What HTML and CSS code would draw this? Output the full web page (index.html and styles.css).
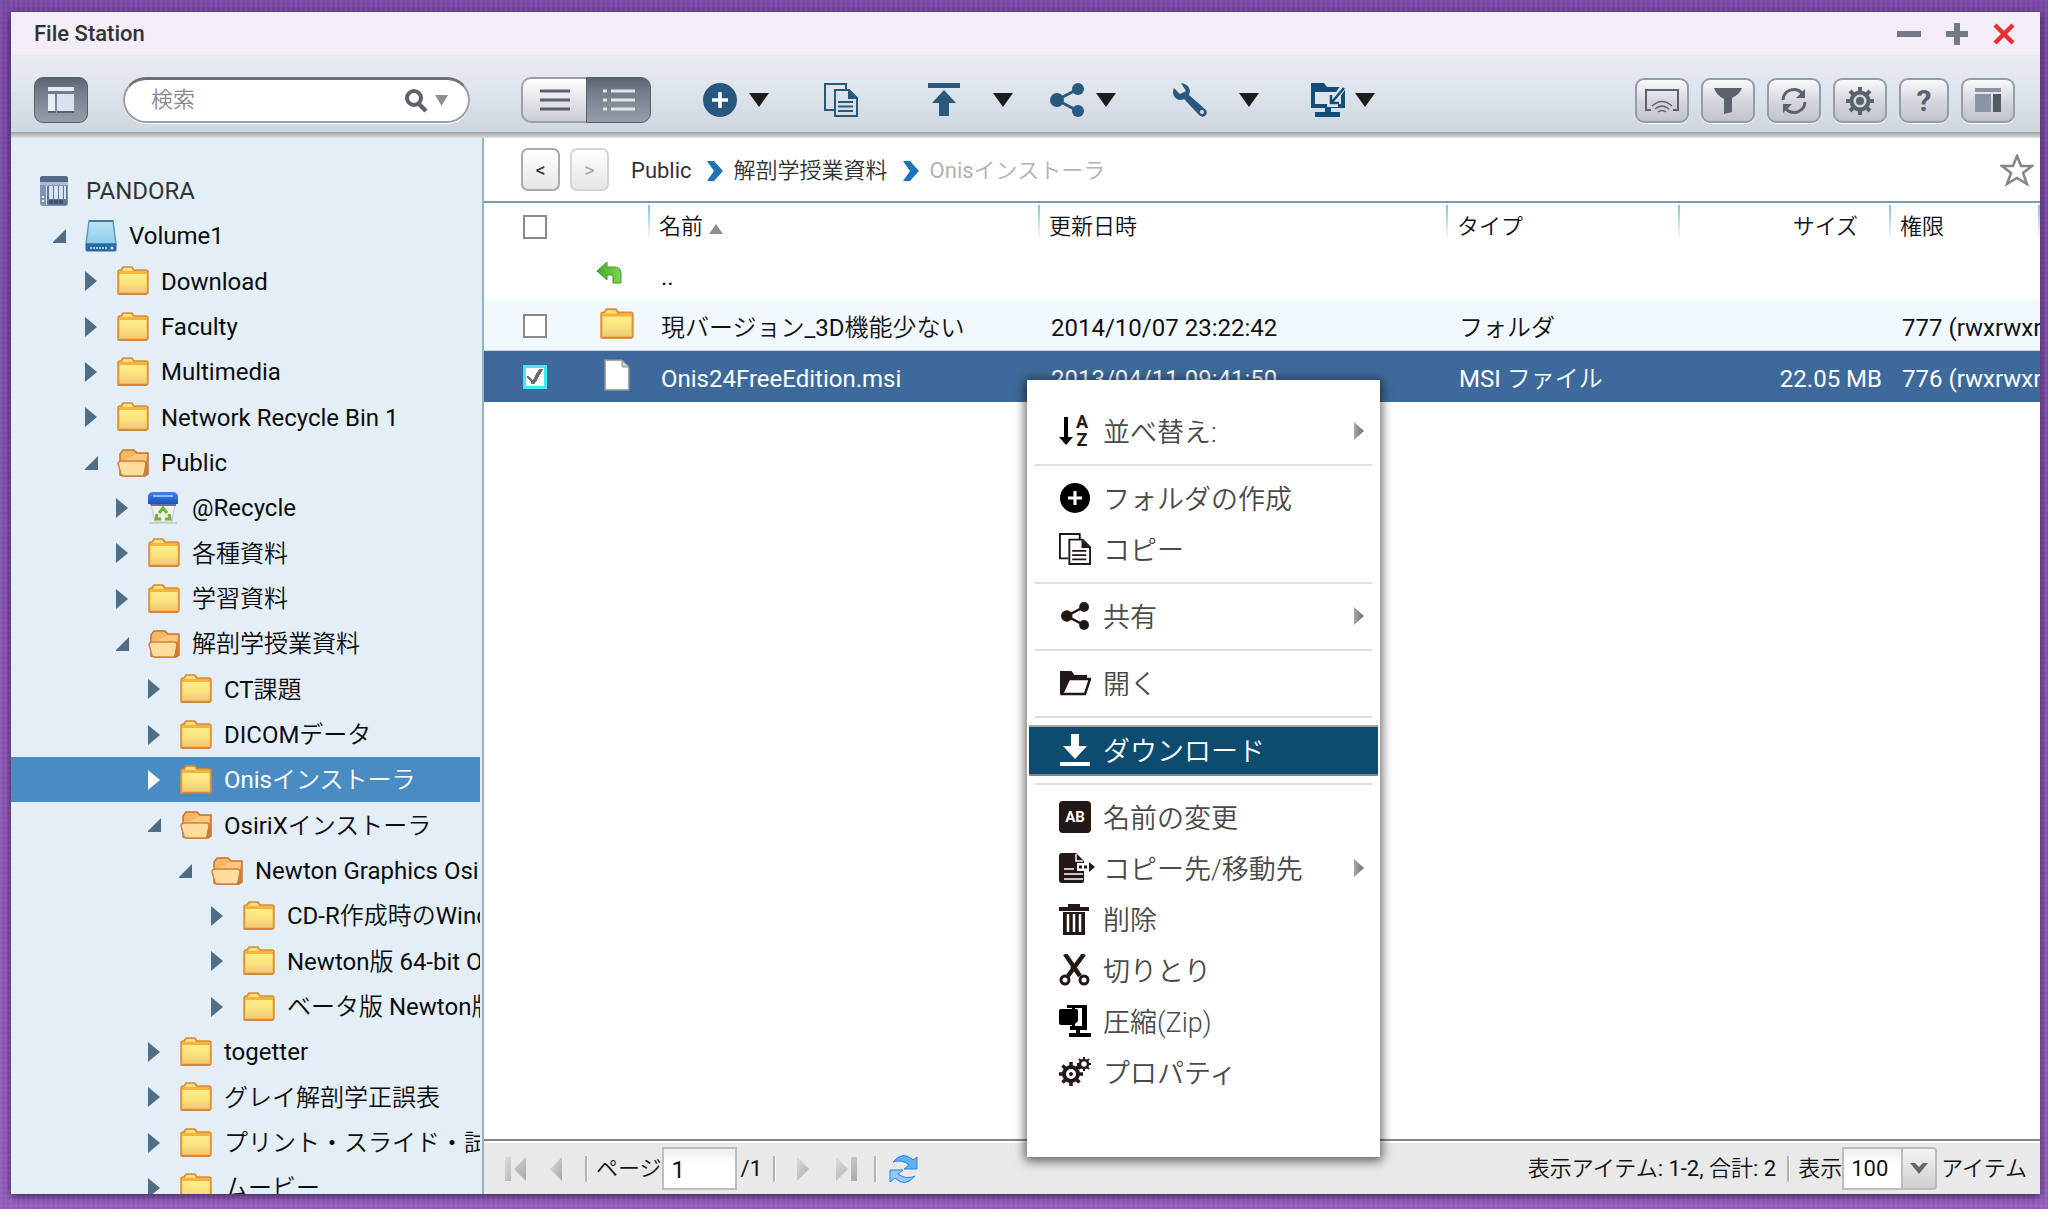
FILE: index.html
```html
<!DOCTYPE html>
<html lang="ja">
<head>
<meta charset="utf-8">
<title>File Station</title>
<link rel="stylesheet" href="styles.css">
</head>
<body>
<svg class="defs" width="0" height="0" aria-hidden="true">
  <defs>
    <linearGradient id="gFolder" x1="0" y1="0" x2="0" y2="1"><stop offset="0" stop-color="#ffee8c"/><stop offset=".5" stop-color="#fbe47f"/><stop offset="1" stop-color="#f0c877"/></linearGradient>
    <linearGradient id="gDrive" x1="0" y1="0" x2="0" y2="1"><stop offset="0" stop-color="#bfe3f5"/><stop offset="1" stop-color="#8accec"/></linearGradient>
    <linearGradient id="gLid" x1="0" y1="0" x2="0" y2="1"><stop offset="0" stop-color="#3f86ea"/><stop offset="1" stop-color="#1c4fc4"/></linearGradient>
    <linearGradient id="gUp" x1="0" y1="0" x2="1" y2="0"><stop offset="0" stop-color="#45a82e"/><stop offset="1" stop-color="#7fd64f"/></linearGradient>
    <linearGradient id="gPager" x1="0" y1="0" x2="1" y2="1"><stop offset="0" stop-color="#dcdcdc"/><stop offset="1" stop-color="#a8a8a8"/></linearGradient>
    <linearGradient id="gSub" x1="0" y1="0" x2="1" y2="0"><stop offset="0" stop-color="#a9a9a9"/><stop offset="1" stop-color="#6e6e6e"/></linearGradient>
  </defs>
  <symbol id="closed" viewBox="0 0 14 20"><path d="M0 0 12 10 0 20z" fill="currentColor"/></symbol>
  <symbol id="opened" viewBox="0 0 14 20"><path d="M13 3V17H-1z" fill="currentColor"/></symbol>
  <symbol id="folder" viewBox="0 0 32 30"><path d="M1 28V6q0-2 2-2h1l2-3h9l2 3h12q2 0 2 2v20q0 2-2 2z" fill="#f7b23c" stroke="#d98e3e" stroke-width="1.5"/><path d="M5 5l2-3h7l2 3z" fill="#fddf7c"/><path d="M2.500 8h27v18.500h-27z" fill="url(#gFolder)"/><path d="M2 28h28" stroke="#c9803a" stroke-width="1.500"/></symbol>
  <symbol id="folder-open" viewBox="0 0 32 30"><path d="M3 27V6l3-4h11l3 3h11v21l-3 2H6z" fill="#f6b765" stroke="#c9722f" stroke-width="1.500"/><path d="M20 6h10v16l-2-9H6" fill="#fbc77c"/><path d="M1 16q0-3 4-3h21q3 0 3 3l-2 11q0 1-2 1H7q-2 0-3-2z" fill="#fddc9e" stroke="#d2813a" stroke-width="1.500"/><path d="M30 8v18l-4 2 3-12z" fill="#cf7a34"/></symbol>
  <symbol id="nas" viewBox="0 0 28 30"><rect width="28" height="30" rx="3" fill="#7d93b8"/><path d="M0 7V3q0-3 3-3h22q3 0 3 3v4z" fill="#596a86"/><path d="M0 6h28v3H0z" fill="#aebdd6"/><path d="M7 10h20v19H7z" fill="#5f7499"/><path d="M9 10h4v13H9zm5 0h4v13h-4zm5 0h4v13h-4zM6 9h1v20H6z" fill="#d9e3f0"/><path d="M24 10h2v13h-2z" fill="#d9e3f0"/><path d="M9 24h4v4H9zm5 0h4v4h-4zm5 0h4v4h-4z" fill="#41506c"/><path d="M2 20h2v2H2zm0 4h2v2H2z" fill="#e6edf6"/></symbol>
  <symbol id="drive" viewBox="0 0 32 32"><path d="M4 1h24l3 23H1z" fill="url(#gDrive)" stroke="#5c9cc4" stroke-width="1.500"/><path d="M4 1h24" stroke="#4d7699" stroke-width="2"/><path d="M1 24h30v6q0 1-1 1H2q-1 0-1-1z" fill="#2b6ba0" stroke="#2b679a"/><path d="M5 28h17" stroke="#9cc6e4" stroke-width="2" stroke-dasharray="2 1"/><circle cx="27" cy="28" r="1.500" fill="#c7e6f7"/></symbol>
  <symbol id="bin" viewBox="0 0 32 32"><path d="M3 12h24l-3 18H7z" fill="#efefec" stroke="#c3c7c8"/><path d="M1 31h28" stroke="#b4babd"/><path d="M0 12V4q1-4 5-4h20q4 0 5 4v8z" fill="url(#gLid)"/><path d="M5 4h20" stroke="#8dbcf6" stroke-width="2"/><path d="M2 12h26v2H3z" fill="#66728a"/><path d="M11 21l4-5 4 5M21 22l1 5h-5M9 22l-1 5h5" fill="none" stroke="#6fb23c" stroke-width="3"/></symbol>
  <symbol id="file" viewBox="0 0 26 32"><path d="M1 1h17l7 7v23H1z" fill="#fff" stroke="#8b8f94" stroke-width="1.500"/><path d="M18 1v7h7z" fill="#c9ccd0" stroke="#8b8f94"/></symbol>
  <symbol id="up" viewBox="0 0 26 22"><path d="M1 9 11 0v5h7q7 0 7 7v9h-8v-6q0-2-2-2h-4v5z" fill="url(#gUp)" stroke="#3f9a2c"/></symbol>

  <symbol id="plus" viewBox="0 0 34 34"><circle cx="17" cy="17" r="17" fill="currentColor"/><path d="M17 9v16M9 17h16" stroke="#fff" stroke-width="3.500"/></symbol>
  <symbol id="copy" viewBox="0 0 34 34"><path d="M10 27H1V1h21v6" fill="none" stroke="currentColor" stroke-width="2"/><path d="M11 7h14l8 8v18H11z" fill="none" stroke="currentColor" stroke-width="2"/><path d="M24 7v9h9z" fill="currentColor"/><path d="M14 19h15M14 23.500h15M14 28h15" stroke="currentColor" stroke-width="2"/></symbol>
  <symbol id="upload" viewBox="0 0 34 34"><path d="M1 0h32v5H1zM17 7l12 13h-7v13H12V20H5z" fill="currentColor"/></symbol>
  <symbol id="share" viewBox="0 0 34 34"><path d="M28 6 7 17l21 11" fill="none" stroke="currentColor" stroke-width="3"/><circle cx="7" cy="17" r="7" fill="currentColor"/><circle cx="28" cy="6" r="6" fill="currentColor"/><circle cx="28" cy="28" r="6" fill="currentColor"/></symbol>
  <symbol id="wrench" viewBox="0 0 34 34"><path d="M8 0q8 1 9 8l-1 4 17 15q2 3-1 6-3 2-6-1L11 16q-6 3-10-3-2-4 0-8l6 6 6-3z" fill="currentColor"/><circle cx="29" cy="29" r="2" fill="#dfe4ea"/></symbol>
  <symbol id="remote" viewBox="0 0 34 34"><path d="M0 0h13l3 4h18v21H20v4h9v5H4v-5h10v-4H0z" fill="currentColor"/><path d="M4 9h26v12H4z" fill="#dfe4ea"/><path d="M33 3 21 20M19 12v9h8" fill="none" stroke="#dfe4ea" stroke-width="6"/><path d="M33 5 21 19M20 12v8h8" fill="none" stroke="currentColor" stroke-width="2.500"/></symbol>
  <symbol id="caret" viewBox="0 0 20 14"><path d="M0 0h20L10 14z" fill="currentColor"/></symbol>

  <symbol id="cast" viewBox="0 0 34 24"><path d="M6 21H1V1h32v20h-5" fill="none" stroke="currentColor" stroke-width="2"/><path d="M7 17q10-9 20 0M10 20q7-6 14 0M13 23q4-3 8 0" fill="none" stroke="currentColor" stroke-width="1.500"/></symbol>
  <symbol id="filter" viewBox="0 0 28 26"><path d="M0 0h28q-2 6-10 10v14l-8 2V11Q2 7 0 0z" fill="currentColor"/></symbol>
  <symbol id="sync" viewBox="0 0 28 28"><path d="M3 13A11 11 0 0 1 22 6M25 15A11 11 0 0 1 6 22" fill="none" stroke="currentColor" stroke-width="3"/><path d="M25 2v9H16zM3 26V17h9z" fill="currentColor"/></symbol>
  <symbol id="gear" viewBox="0 0 28 28"><path d="M14 0v28M0 14h28M4 4l20 20M24 4 4 24" stroke="currentColor" stroke-width="4"/><circle cx="14" cy="14" r="8.500" fill="#d6dae0" stroke="currentColor" stroke-width="4"/><circle cx="14" cy="14" r="4" fill="currentColor"/></symbol>
  <symbol id="star" viewBox="0 0 34 32"><path d="M17 2l4 10h11l-9 7 4 11-10-6-10 6 4-11-9-7h11z" fill="none" stroke="currentColor" stroke-width="2.500"/></symbol>
  <symbol id="chev" viewBox="0 0 16 20"><path d="M0 0h7l9 10-9 10H0l7-10z" fill="#1f74b8"/></symbol>

  <symbol id="open" viewBox="0 0 32 26"><path d="M2 24V2h10l3 4h12v4" fill="currentColor" stroke="currentColor" stroke-width="2"/><path d="M3 24 10 9h21l-5 15z" fill="#fff" stroke="currentColor" stroke-width="2.500"/></symbol>
  <symbol id="download" viewBox="0 0 32 32"><path d="M12 0h8v12h8L16 25 4 12h8zM1 28h30v4H1z" fill="currentColor"/></symbol>
  <symbol id="moveto" viewBox="0 0 36 30"><path d="M3 0h14l8 8v20q0 2-2 2H3q-3 0-3-3V3q0-3 3-3z" fill="currentColor"/><path d="M17 1v7h7M5 16h10M5 21h19M5 26h19" fill="none" stroke="#fff" stroke-width="1.500"/><path d="M18 10h18v8H18z" fill="#fff"/><path d="M20 14h10" stroke="currentColor" stroke-width="3" stroke-dasharray="3 2"/><path d="M30 9l6 5-6 5z" fill="currentColor"/></symbol>
  <symbol id="trash" viewBox="0 0 32 32"><path d="M0 4h9V1h12v3h9v4H0zM4 9h22v23H4z" fill="currentColor"/><path d="M9 11v18M15 11v18M21 11v18" stroke="#fff" stroke-width="2.500"/></symbol>
  <symbol id="cut" viewBox="0 0 32 32"><path d="M6 0l15 22M25 0 9 22" stroke="currentColor" stroke-width="4.500"/><path d="M16 15l-3-3M15 15h2" stroke="currentColor" stroke-width="5"/><circle cx="6" cy="26" r="4" fill="none" stroke="currentColor" stroke-width="3"/><circle cx="25" cy="26" r="4" fill="none" stroke="currentColor" stroke-width="3"/></symbol>
  <symbol id="zip" viewBox="0 0 32 32"><path d="M8 0h20v25h-7v3h11v4H10v-4h7v-3h-6v-4h2V3H8z" fill="currentColor"/><path d="M16 3h7v18h-7z" fill="#fff"/><path d="M2 4h15q2 0 2 2v10l-4 4H2q-2 0-2-2V6q0-2 2-2z" fill="currentColor"/></symbol>
  <symbol id="gears" viewBox="0 0 32 32"><path d="M12 6v24M0 18h24M3.500 9.500l17 17M20.500 9.500l-17 17" stroke="currentColor" stroke-width="3.500"/><circle cx="12" cy="18" r="7" fill="#fff" stroke="currentColor" stroke-width="4"/><circle cx="12" cy="18" r="2" fill="currentColor"/><path d="M25 1v14M18 8h14M20 3l10 10M30 3 20 13" stroke="currentColor" stroke-width="2"/><circle cx="25" cy="8" r="4" fill="#fff" stroke="currentColor" stroke-width="2.500"/></symbol>
  <symbol id="sub" viewBox="0 0 10 18"><path d="M0 0 10 9 0 18z" fill="url(#gSub)"/></symbol>

  <symbol id="first" viewBox="0 0 21 24"><path d="M0 0h6v24H0zM21 0v24L9 12z" fill="url(#gPager)"/></symbol>
  <symbol id="prev" viewBox="0 0 12 24"><path d="M12 0v24L0 12z" fill="url(#gPager)"/></symbol>
  <symbol id="next" viewBox="0 0 12 24"><path d="M0 0v24l12-12z" fill="url(#gPager)"/></symbol>
  <symbol id="last" viewBox="0 0 21 24"><path d="M15 0h6v24h-6zM0 0v24l12-12z" fill="url(#gPager)"/></symbol>
  <symbol id="reload" viewBox="0 0 30 28"><path d="M4 7Q14-5 24 5l4-3v12H15l5-4Q13 4 4 7z" fill="#5fb0f6" stroke="#2b82df"/><path d="M26 21Q16 33 6 23l-5 4V15h13l-5 4q8 6 17 2z" fill="#8ecbfa" stroke="#2b82df"/></symbol>
</svg>

<main class="window">
  <header class="titlebar">
    <h1>File Station</h1>
    <div class="winbtns">
      <button aria-label="最小化"><svg width="24" height="22"><path d="M0 8h24v6H0z" fill="#727a85"/></svg></button>
      <button aria-label="最大化"><svg width="22" height="22"><path d="M8 0h6v8h8v6h-8v8H8v-8H0V8h8z" fill="#727a85"/></svg></button>
      <button aria-label="閉じる"><svg width="22" height="22"><path d="M2 2l18 18M20 2 2 20" stroke="#e83030" stroke-width="4.500"/></svg></button>
    </div>
  </header>

  <div class="toolbar">
    <button class="dark toggle" aria-label="ツリー表示"><svg width="26" height="26"><path d="M0 0h26v4H0zM0 7h7v17H0z" fill="#e8edf4"/><path d="M9 7h17v17H9z" fill="#d9e2ec"/><path d="M0 25h8M9 25h17" stroke="#5a626d" stroke-width="2"/></svg></button>
    <div class="search">
      <input type="search" placeholder="検索" aria-label="検索">
      <svg width="22" height="24"><circle cx="9" cy="10" r="7" fill="none" stroke="#5b646e" stroke-width="4"/><path d="M14 16l7 7" stroke="#5b646e" stroke-width="4.500"/></svg>
      <svg width="13" height="11"><path d="M0 0h13L6.500 11z" fill="#8b9299"/></svg>
    </div>
    <div class="views">
      <button aria-label="リスト"><svg width="30" height="22"><path d="M0 2h30M0 11h30M0 20h30" stroke="#5a6068" stroke-width="3"/></svg></button>
      <button class="dark" aria-label="詳細"><svg width="32" height="22"><path d="M0 2h4M8 2h24M0 11h4M8 11h24M0 20h4M8 20h24" stroke="#dfe6ee" stroke-width="3"/></svg></button>
    </div>
    <div class="tools">
      <button class="t1" aria-label="作成"><svg width="34" height="34"><use href="#plus"/></svg><svg class="caret" width="20" height="14"><use href="#caret"/></svg></button>
      <button class="t2" aria-label="コピー"><svg width="34" height="34"><use href="#copy"/></svg></button>
      <button class="t3" aria-label="アップロード"><svg width="34" height="34"><use href="#upload"/></svg><svg class="caret" width="20" height="14"><use href="#caret"/></svg></button>
      <button class="t4" aria-label="共有"><svg width="34" height="34"><use href="#share"/></svg><svg class="caret" width="20" height="14"><use href="#caret"/></svg></button>
      <button class="t5" aria-label="ツール"><svg width="34" height="34"><use href="#wrench"/></svg><svg class="caret" width="20" height="14"><use href="#caret"/></svg></button>
      <button class="t6" aria-label="リモート接続"><svg width="34" height="34"><use href="#remote"/></svg><svg class="caret" width="20" height="14"><use href="#caret"/></svg></button>
    </div>
    <div class="right">
      <button class="light" aria-label="ストリーミング"><svg width="34" height="24"><use href="#cast"/></svg></button>
      <button class="light" aria-label="フィルター"><svg width="28" height="26"><use href="#filter"/></svg></button>
      <button class="light" aria-label="更新"><svg width="28" height="28"><use href="#sync"/></svg></button>
      <button class="light" aria-label="設定"><svg width="28" height="28"><use href="#gear"/></svg></button>
      <button class="light help">?</button>
      <button class="light" aria-label="詳細パネル"><svg width="26" height="26"><path d="M0 0h26v4H0zM0 6h16v18H0z" fill="#8b94a0"/><path d="M18 6h8v18h-8z" fill="#555b64"/></svg></button>
    </div>
  </div>

  <div class="body">
    <nav class="sidebar" aria-label="フォルダツリー">
      <ul class="tree">
        <li class="root"><svg width="28" height="30"><use href="#nas"/></svg><span>PANDORA</span></li>
        <li class="l1"><svg class="ar" width="14" height="20"><use href="#opened"/></svg><svg width="32" height="32"><use href="#drive"/></svg><span>Volume1</span></li>
        <li class="l2"><svg class="ar" width="14" height="20"><use href="#closed"/></svg><svg width="32" height="30"><use href="#folder"/></svg><span>Download</span></li>
        <li class="l2"><svg class="ar" width="14" height="20"><use href="#closed"/></svg><svg width="32" height="30"><use href="#folder"/></svg><span>Faculty</span></li>
        <li class="l2"><svg class="ar" width="14" height="20"><use href="#closed"/></svg><svg width="32" height="30"><use href="#folder"/></svg><span>Multimedia</span></li>
        <li class="l2"><svg class="ar" width="14" height="20"><use href="#closed"/></svg><svg width="32" height="30"><use href="#folder"/></svg><span>Network Recycle Bin 1</span></li>
        <li class="l2"><svg class="ar" width="14" height="20"><use href="#opened"/></svg><svg width="32" height="30"><use href="#folder-open"/></svg><span>Public</span></li>
        <li class="l3"><svg class="ar" width="14" height="20"><use href="#closed"/></svg><svg width="32" height="32"><use href="#bin"/></svg><span>@Recycle</span></li>
        <li class="l3"><svg class="ar" width="14" height="20"><use href="#closed"/></svg><svg width="32" height="30"><use href="#folder"/></svg><span>各種資料</span></li>
        <li class="l3"><svg class="ar" width="14" height="20"><use href="#closed"/></svg><svg width="32" height="30"><use href="#folder"/></svg><span>学習資料</span></li>
        <li class="l3"><svg class="ar" width="14" height="20"><use href="#opened"/></svg><svg width="32" height="30"><use href="#folder-open"/></svg><span>解剖学授業資料</span></li>
        <li class="l4"><svg class="ar" width="14" height="20"><use href="#closed"/></svg><svg width="32" height="30"><use href="#folder"/></svg><span>CT課題</span></li>
        <li class="l4"><svg class="ar" width="14" height="20"><use href="#closed"/></svg><svg width="32" height="30"><use href="#folder"/></svg><span>DICOMデータ</span></li>
        <li class="l4 sel"><svg class="ar" width="14" height="20"><use href="#closed"/></svg><svg width="32" height="30"><use href="#folder"/></svg><span>Onisインストーラ</span></li>
        <li class="l4"><svg class="ar" width="14" height="20"><use href="#opened"/></svg><svg width="32" height="30"><use href="#folder-open"/></svg><span>OsiriXインストーラ</span></li>
        <li class="l5"><svg class="ar" width="14" height="20"><use href="#opened"/></svg><svg width="32" height="30"><use href="#folder-open"/></svg><span>Newton Graphics Osi</span></li>
        <li class="l6"><svg class="ar" width="14" height="20"><use href="#closed"/></svg><svg width="32" height="30"><use href="#folder"/></svg><span>CD-R作成時のWind</span></li>
        <li class="l6"><svg class="ar" width="14" height="20"><use href="#closed"/></svg><svg width="32" height="30"><use href="#folder"/></svg><span>Newton版 64-bit O</span></li>
        <li class="l6"><svg class="ar" width="14" height="20"><use href="#closed"/></svg><svg width="32" height="30"><use href="#folder"/></svg><span>ベータ版 Newton版</span></li>
        <li class="l4"><svg class="ar" width="14" height="20"><use href="#closed"/></svg><svg width="32" height="30"><use href="#folder"/></svg><span>togetter</span></li>
        <li class="l4"><svg class="ar" width="14" height="20"><use href="#closed"/></svg><svg width="32" height="30"><use href="#folder"/></svg><span>グレイ解剖学正誤表</span></li>
        <li class="l4"><svg class="ar" width="14" height="20"><use href="#closed"/></svg><svg width="32" height="30"><use href="#folder"/></svg><span>プリント・スライド・試</span></li>
        <li class="l4"><svg class="ar" width="14" height="20"><use href="#closed"/></svg><svg width="32" height="30"><use href="#folder"/></svg><span>ムービー</span></li>
      </ul>
    </nav>

    <section class="content">
      <div class="crumbs">
        <button class="nav">&lt;</button>
        <button class="nav off" disabled>&gt;</button>
        <a href="#">Public</a>
        <svg width="16" height="20"><use href="#chev"/></svg>
        <a href="#">解剖学授業資料</a>
        <svg width="16" height="20"><use href="#chev"/></svg>
        <span class="here">Onisインストーラ</span>
        <button class="fav" aria-label="お気に入り"><svg width="34" height="32"><use href="#star"/></svg></button>
      </div>

      <div class="grid">
        <table>
          <colgroup><col class="c-check"><col class="c-icon"><col class="c-name"><col class="c-date"><col class="c-type"><col class="c-size"><col></colgroup>
          <thead>
            <tr>
              <th class="chk"><input type="checkbox" aria-label="すべて選択"></th>
              <th class="ico"></th>
              <th>名前 <svg width="14" height="10"><path d="M7 0l7 10H0z" fill="#8d8d8d"/></svg></th>
              <th>更新日時</th>
              <th>タイプ</th>
              <th class="size">サイズ</th>
              <th>権限</th>
            </tr>
          </thead>
          <tbody>
            <tr><td></td><td class="ico"><svg class="back" width="26" height="22"><use href="#up"/></svg></td><td>..</td><td></td><td></td><td></td><td></td></tr>
            <tr class="alt"><td class="chk"><input type="checkbox" aria-label="現バージョン_3D機能少ない"></td><td class="ico"><svg width="34" height="32"><use href="#folder"/></svg></td><td>現バージョン_3D機能少ない</td><td>2014/10/07 23:22:42</td><td>フォルダ</td><td></td><td>777 (rwxrwxr</td></tr>
            <tr class="sel"><td class="chk"><input type="checkbox" checked aria-label="Onis24FreeEdition.msi"></td><td class="ico"><svg width="34" height="32"><use href="#file"/></svg></td><td>Onis24FreeEdition.msi</td><td>2013/04/11 09:41:50</td><td>MSI ファイル</td><td class="size">22.05 MB</td><td>776 (rwxrwxr</td></tr>
          </tbody>
        </table>
      </div>

      <footer class="pager">
        <button class="p-first" aria-label="最初のページ"><svg width="21" height="24"><use href="#first"/></svg></button>
        <button class="p-prev" aria-label="前のページ"><svg width="12" height="24"><use href="#prev"/></svg></button>
        <i class="bar"></i>
        <label for="page">ページ</label>
        <input id="page" type="text" value="1">
        <span class="total">/1</span>
        <i class="bar"></i>
        <button class="p-next" aria-label="次のページ"><svg width="12" height="24"><use href="#next"/></svg></button>
        <button class="p-last" aria-label="最後のページ"><svg width="21" height="24"><use href="#last"/></svg></button>
        <i class="bar"></i>
        <button class="p-reload" aria-label="再読み込み"><svg width="30" height="28"><use href="#reload"/></svg></button>
        <span class="count">表示アイテム: 1-2, 合計: 2</span>
        <i class="bar"></i>
        <label for="per">表示</label>
        <span class="combo"><select id="per"><option>100</option></select><svg width="18" height="12"><path d="M0 1h5l4 4 4-4h5L9 12z" fill="#666"/></svg></span>
        <span class="unit">アイテム</span>
      </footer>
    </section>
  </div>

  <div class="menu" role="menu">
    <button role="menuitem"><svg width="32" height="32"><path d="M5 2h4v20h5l-7 8-7-8h5z" fill="#000"/><text x="23" y="13" text-anchor="middle" class="sort-text">A</text><text x="23" y="31" text-anchor="middle" class="sort-text">Z</text></svg>並べ替え:<svg class="sub" width="10" height="18"><use href="#sub"/></svg></button>
    <hr>
    <button role="menuitem"><svg class="black" width="32" height="30"><use href="#plus"/></svg>フォルダの作成</button>
    <button role="menuitem"><svg width="32" height="32"><use href="#copy"/></svg>コピー</button>
    <hr>
    <button role="menuitem"><svg width="32" height="28"><use href="#share"/></svg>共有<svg class="sub" width="10" height="18"><use href="#sub"/></svg></button>
    <hr>
    <button role="menuitem"><svg width="32" height="26"><use href="#open"/></svg>開く</button>
    <hr>
    <button role="menuitem" class="on"><svg width="32" height="32"><use href="#download"/></svg>ダウンロード</button>
    <hr>
    <button role="menuitem"><svg width="32" height="32"><rect width="32" height="32" rx="4" fill="currentColor"/><text x="16" y="21" text-anchor="middle" class="badge-text">AB</text></svg>名前の変更</button>
    <button role="menuitem"><svg class="wide" width="36" height="30"><use href="#moveto"/></svg>コピー先/移動先<svg class="sub" width="10" height="18"><use href="#sub"/></svg></button>
    <button role="menuitem"><svg width="32" height="32"><use href="#trash"/></svg>削除</button>
    <button role="menuitem"><svg width="32" height="32"><use href="#cut"/></svg>切りとり</button>
    <button role="menuitem"><svg class="black" width="32" height="32"><use href="#zip"/></svg>圧縮(Zip)</button>
    <button role="menuitem"><svg width="32" height="32"><use href="#gears"/></svg>プロパティ</button>
  </div>
</main>
</body>
</html>
```
FILE: styles.css
```css
* { box-sizing: border-box; }
html, body { margin: 0; height: 100%; }
body {
  padding: 12px 8px 15px 11px;
  overflow: hidden;
  font-family: Roboto, "Noto Sans CJK JP DemiLight", "Noto Sans CJK JP", sans-serif;
  font-size: 24px;
  line-height: 1.2;
  color: #111;
  background:
    repeating-linear-gradient(90deg, rgba(255,255,255,.05) 0 2px, transparent 2px 5px),
    repeating-linear-gradient(0deg, rgba(40,0,80,.06) 0 2px, transparent 2px 5px),
    linear-gradient(#7b49a6, #9560bd);
}
button, input, select { font: inherit; color: inherit; margin: 0; }
button { padding: 0; border: 0; background: none; }
svg { display: block; flex: none; overflow: visible; }
.defs { position: absolute; }

.window {
  position: relative;
  display: flex;
  flex-direction: column;
  height: 100%;
  background: #fff;
  box-shadow: 0 2px 8px rgba(20,0,40,.7);
}

/* title bar */
.titlebar {
  flex: none;
  display: flex;
  align-items: center;
  justify-content: space-between;
  height: 43px;
  padding: 0 25px 0 23px;
  background: #f2edf6;
}
h1 { margin: 0; padding-top: 2px; font-size: 22px; font-weight: 500; color: #333; }
.winbtns { display: flex; gap: 25px; }

/* toolbar */
.toolbar {
  flex: none;
  display: flex;
  align-items: center;
  height: 83px;
  padding: 12px 25px 6px 23px;
  background:
    linear-gradient(#9fa4a7, #b4b7b8 40%, #e2e2e2) 0 100% / 100% 6px no-repeat,
    linear-gradient(#e6ecef, #dfe5ec 40%, #ced4dc);
}
.toolbar button { display: flex; align-items: center; justify-content: center; }
.toolbar .dark {
  background: linear-gradient(#5a6470, #737c87 30%, #959da8);
  border: 1px solid #59616c;
}
.toggle { width: 54px; height: 46px; border-radius: 9px; }
.search {
  display: flex;
  align-items: center;
  gap: 8px;
  width: 347px;
  height: 46px;
  margin: 0 51px 0 35px;
  padding: 0 20px 0 26px;
  border: 2px solid #9b9ea2;
  border-top: 3px solid #6d6f72;
  border-radius: 23px;
  background: #fff;
  box-shadow: 0 1px 0 #fff;
}
.search input { flex: 1; min-width: 0; padding: 0; border: 0; outline: 0; background: none; font-size: 22px; }
.search input::placeholder { color: #8a8a8a; }
.views { display: flex; width: 130px; height: 46px; }
.views button {
  flex: 1;
  border: 2px solid #9aa0ab;
  border-right: 0;
  border-radius: 10px 0 0 10px;
  background: linear-gradient(#fff, #c8cdd6);
}
.views .dark { border-radius: 0 10px 10px 0; border-right: 1px solid #59616c; }
.tools { display: flex; align-items: center; margin-left: 52px; color: #29587f; }
.caret { color: #1c1c1c; }
.t1 { gap: 12px; margin-right: 55px; }
.t2 { margin-right: 69px; }
.t3 { gap: 32px; margin-right: 37px; }
.t4 { gap: 12px; margin-right: 57px; }
.t5 { gap: 32px; margin-right: 52px; }
.t6 { gap: 10px; color: #0f4f78; }
.right { display: flex; gap: 12px; margin: 2px 0 0 auto; color: #5b626c; }
.light {
  width: 54px;
  height: 45px;
  border: 2px solid #969ca8;
  border-radius: 9px;
  background: linear-gradient(#f8f9fb, #d5d8de 50%, #bfc4cc);
  box-shadow: 0 1px 0 #fff;
}
.right .help { width: 50px; font-size: 30px; font-weight: 700; }

.body { flex: 1; display: flex; min-height: 0; }

/* folder tree */
.sidebar {
  flex: none;
  width: 473px;
  overflow: hidden;
  background: #e3eef7;
  border-right: 2px solid #8fb6c6;
}
.tree {
  display: grid;
  grid-auto-rows: 45px 45px 46px;
  margin: 0;
  padding: 30px 2px 0 0;
  list-style: none;
  color: #0c0c0c;
}
.tree li { display: flex; align-items: center; overflow: hidden; white-space: nowrap; }
.tree span { padding-top: 2px; }
.tree svg { margin-right: 12px; }
.tree .ar { margin-right: 18px; color: #4f6e86; }
.root { padding-left: 29px; color: #333; }
.tree .root svg { margin-right: 18px; }
.l1 { padding-left: 42px; }
.l2 { padding-left: 74px; }
.l3 { padding-left: 105px; }
.l4 { padding-left: 137px; }
.l5 { padding-left: 168px; }
.l6 { padding-left: 200px; }
.tree .sel { background: #488cc3; color: #fff; }
.tree .sel .ar { color: #fff; }

/* breadcrumb */
.content { flex: 1; min-width: 0; display: flex; flex-direction: column; }
.crumbs {
  flex: none;
  display: flex;
  align-items: center;
  height: 65px;
  padding: 0 6px 0 37px;
  border-bottom: 2px solid #76a0b2;
  font-size: 22px;
  color: #333;
}
.crumbs > svg { margin: 2px 11px 0 15px; }
.crumbs a { padding-top: 4px; color: inherit; text-decoration: none; }
.here { padding-top: 4px; color: #b2b2b2; }
.nav {
  width: 39px;
  height: 43px;
  margin-right: 10px;
  border: 2px solid #a9a9a9;
  border-radius: 7px;
  background: linear-gradient(#fff, #e6e6e6);
  font-size: 20px;
}
.nav.off { margin-right: 22px; border-color: #d4d4d4; color: #aaa; }
.fav { margin-left: auto; color: #858585; }

/* file list */
.grid { flex: 1; min-height: 0; overflow: hidden; }
table { width: 100%; table-layout: fixed; border-collapse: separate; border-spacing: 0; }
.c-check { width: 86px; }
.c-icon { width: 78px; }
.c-name { width: 390px; }
.c-date { width: 408px; }
.c-type { width: 232px; }
.c-size { width: 211px; }
th, td { padding: 0 0 0 13px; text-align: left; white-space: nowrap; overflow: hidden; }
th {
  height: 46px;
  padding: 2px 0 0 11px;
  font-size: 22px;
  font-weight: 400;
  background: linear-gradient(#7fc7da, rgba(127,199,218,0)) 0 2px / 2px 36px no-repeat;
}
th svg { display: inline-block; margin-left: 1px; }
th.chk, th.ico { background: none; }
th:last-child {
  background:
    linear-gradient(#7fc7da, rgba(127,199,218,0)) 0 2px / 2px 36px no-repeat,
    linear-gradient(#7fc7da, rgba(127,199,218,0)) 100% 2px / 2px 36px no-repeat;
}
td { height: 51px; padding-top: 6px; border-bottom: 1px solid transparent; }
td.ico { padding: 0 0 2px 30px; }
.back { margin-left: -4px; }
th.chk, td.chk { padding: 2px 0 0 39px; }
th.size { text-align: right; padding-right: 31px; }
td.size { text-align: right; padding-right: 7px; }
.alt td { background: #f2f9fe; border-bottom-color: #c3d5e2; }
.grid .sel { background: #3e6a9b; color: #fff; }
.chk input {
  appearance: none;
  display: block;
  width: 24px;
  height: 24px;
  border: 2px solid #8a8a8a;
  background: #fff;
}
.chk input:checked {
  border: 3px solid #3fe9f5;
  background:
    linear-gradient(45deg, transparent 42%, #6a6a6a 42% 60%, transparent 60%) 1px 8px / 8px 8px no-repeat,
    linear-gradient(-60deg, transparent 41%, #6a6a6a 41% 61%, transparent 61%) 5px 1px / 12px 15px no-repeat,
    #fff;
}

/* pager */
.pager {
  flex: none;
  display: flex;
  align-items: center;
  height: 55px;
  padding: 2px 13px 0 21px;
  border-top: 2px solid #858585;
  background: linear-gradient(#fff 2px, #e9e9e9 2px);
  font-size: 22px;
}
.bar { width: 3px; height: 26px; background: #b9b4a4; border-right: 1px solid #fff; }
.p-first { margin-right: 24px; }
.p-prev { margin-right: 23px; }
.pager label { margin-left: 8px; }
.pager label, .total, .count, .unit { padding-top: 2px; }
#page {
  width: 75px;
  height: 43px;
  padding: 2px 8px 0;
  border: 2px solid #bdbdbd;
  background: linear-gradient(#e9eeef, #fff 14px);
  outline: 0;
  font-size: 24px;
}
.total { margin: 0 11px 0 4px; }
.p-next { margin: 0 27px 0 21px; }
.p-last { margin-right: 17px; }
.p-reload { margin-left: 12px; }
.count { margin: 0 11px 0 auto; }
.combo { position: relative; }
.combo svg { position: absolute; right: 9px; top: 15px; pointer-events: none; }
#per {
  appearance: none;
  display: block;
  width: 95px;
  height: 43px;
  padding: 2px 0 0 7px;
  border: 2px solid #bdbdbd;
  border-radius: 0 4px 4px 0;
  background:
    linear-gradient(#bdbdbd, #bdbdbd) 57px 0 / 2px 100% no-repeat,
    linear-gradient(#f4f4f4, #cfcfcf) 58px 0 / 100% 100% no-repeat,
    linear-gradient(#e9eeef, #fff 14px);
}
.unit { margin-left: 4px; }

/* context menu */
.menu {
  position: absolute;
  left: 1016px;
  top: 368px;
  display: flex;
  flex-direction: column;
  width: 353px;
  padding: 26px 2px 59px;
  background: #fff;
  box-shadow: 0 2px 10px 2px rgba(0,0,0,.6);
  font-size: 27px;
  color: #4a4a4a;
}
.menu button {
  display: flex;
  align-items: center;
  gap: 12px;
  height: 51px;
  padding: 3px 14px 0 30px;
  font-weight: 300;
  text-align: left;
}
.menu svg { margin-bottom: 4px; color: #231815; }
.menu .black { color: #000; }
.menu .wide { margin-right: -4px; }
.menu .sub { margin-left: auto; }
.menu hr { width: 337px; height: 2px; margin: 7px auto; border: 0; background: #dedede; }
.menu .on {
  background: #0d4c6f;
  color: #fff;
  border-top: 2px solid #a6a6a6;
  border-bottom: 2px solid #858585;
}
.menu .on svg { color: #fff; }
.badge-text { font: 700 15px Roboto, sans-serif; fill: #fff; }
.sort-text { font: 700 18px/1 Roboto, sans-serif; fill: currentColor; }
```
